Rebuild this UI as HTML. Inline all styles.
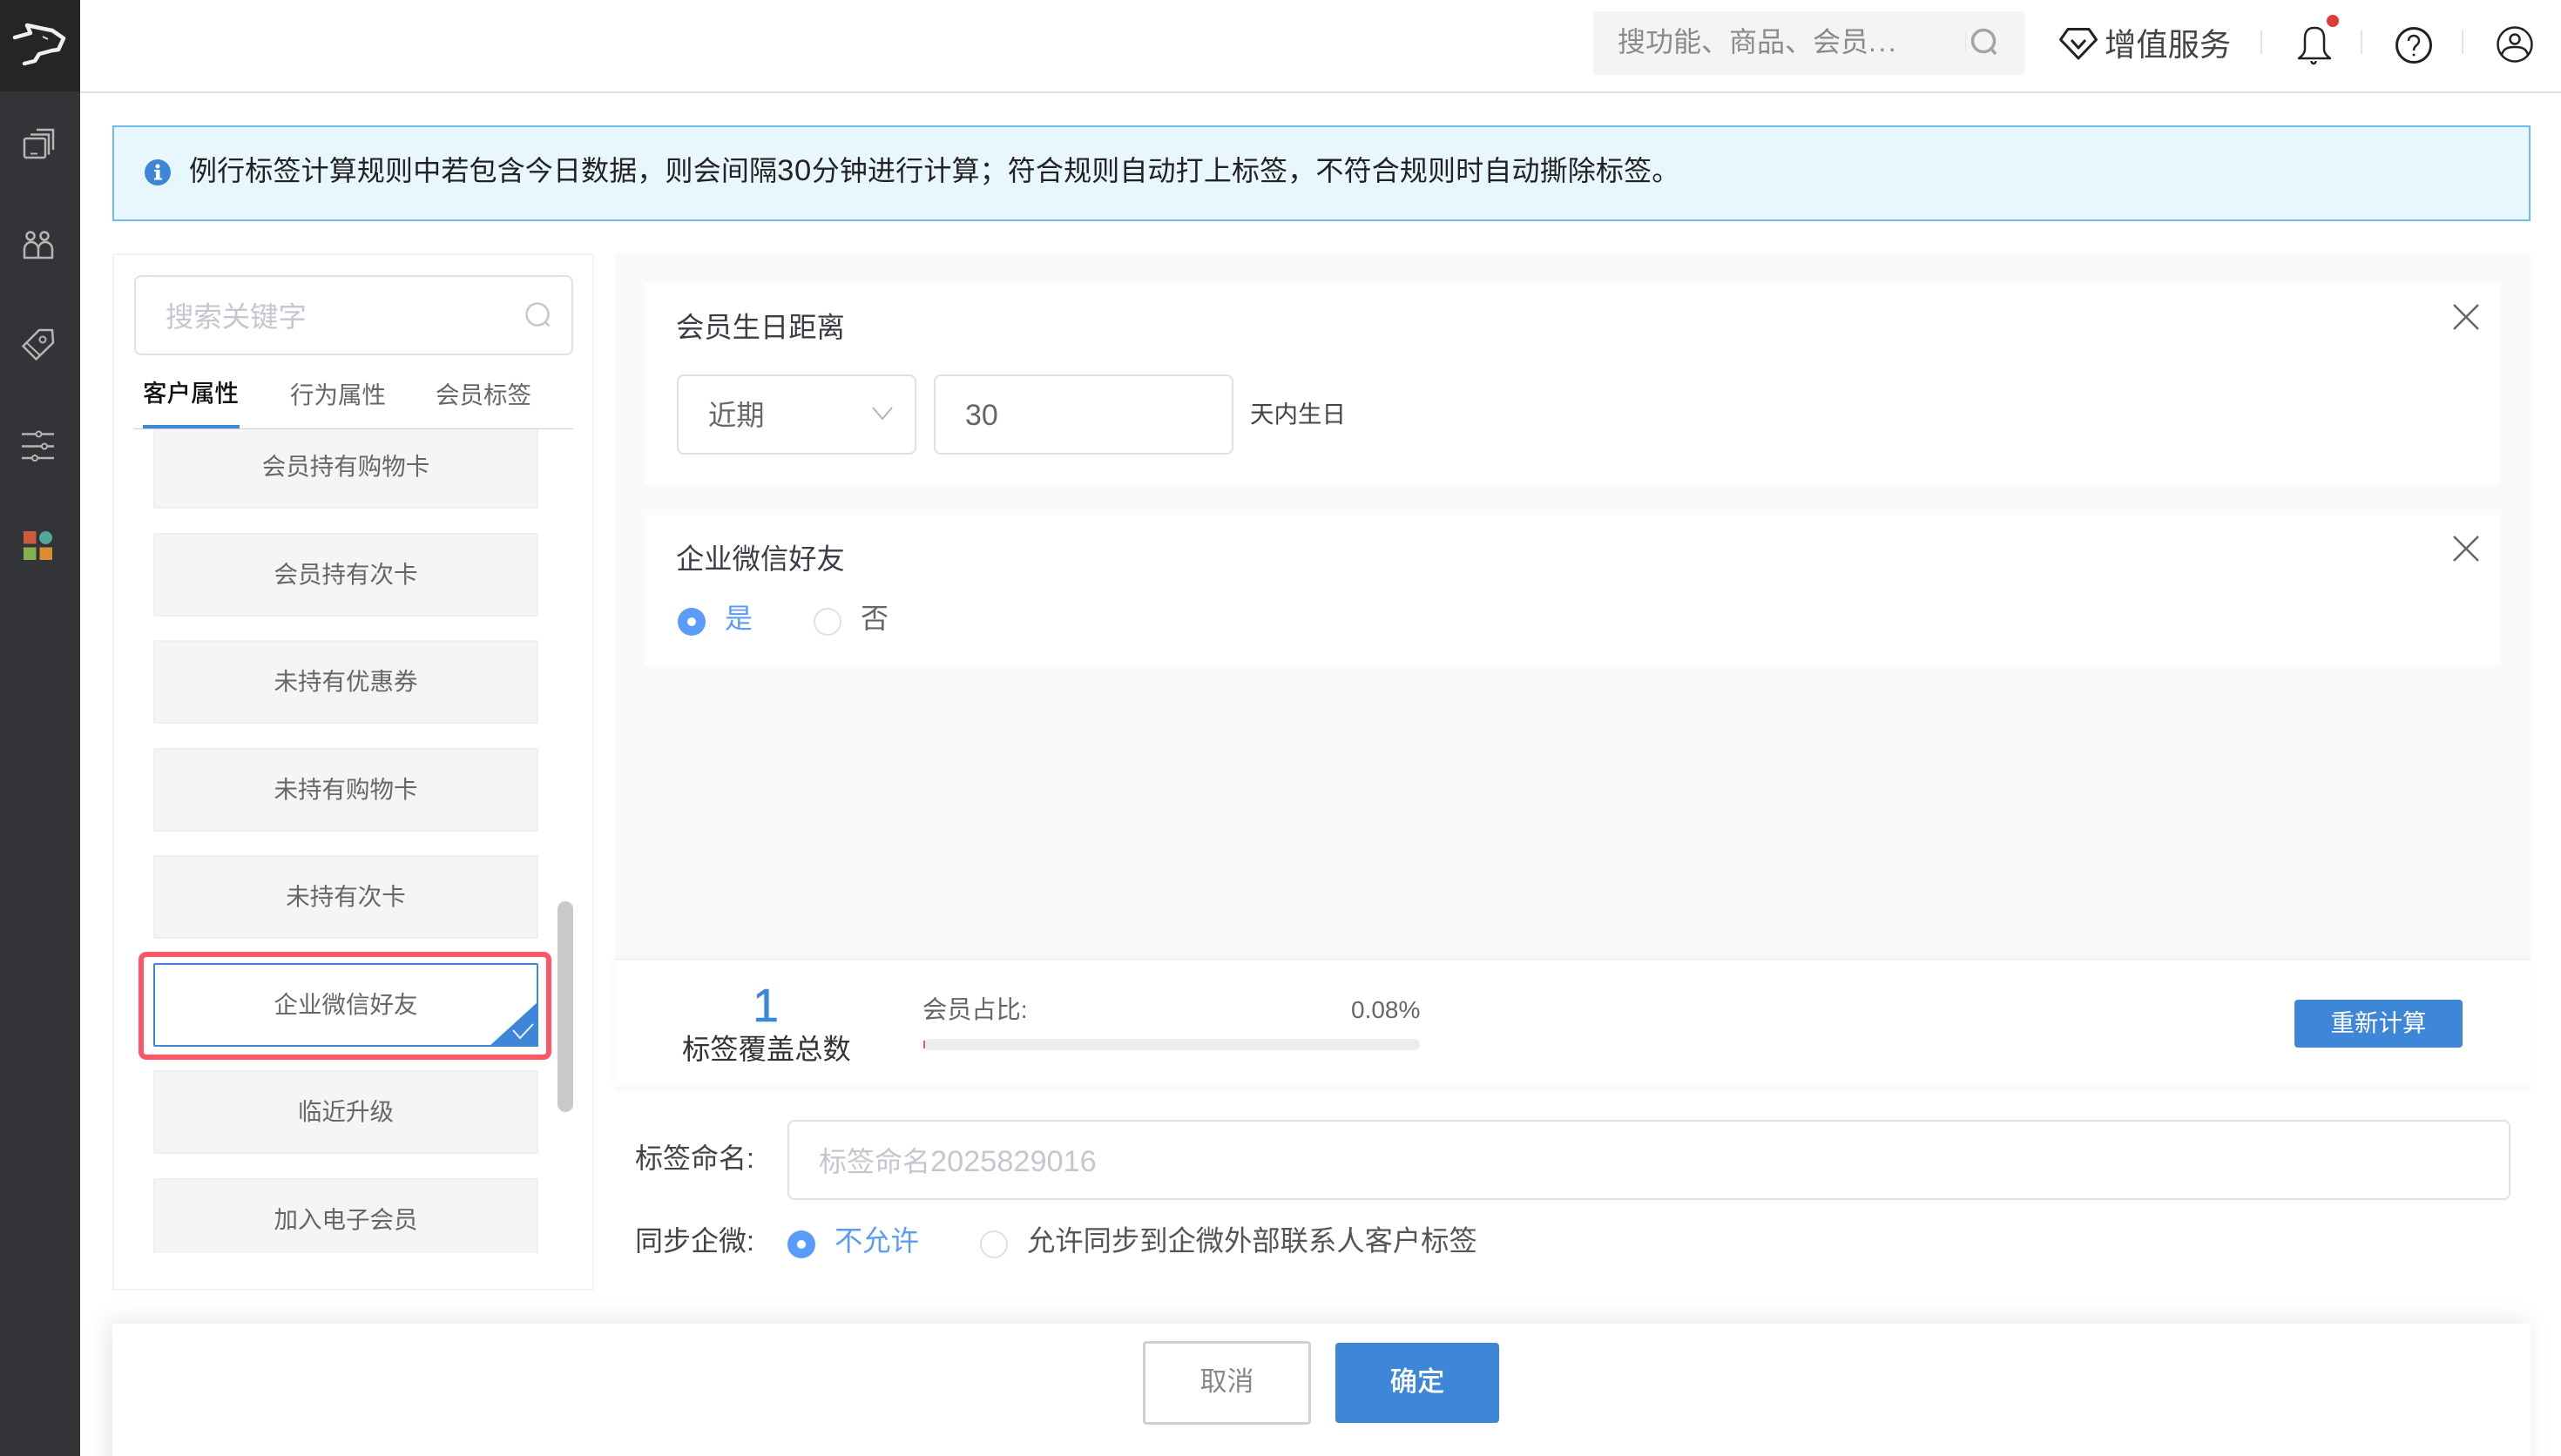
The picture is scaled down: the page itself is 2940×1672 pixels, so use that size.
<!DOCTYPE html>
<html lang="zh">
<head>
<meta charset="utf-8">
<title>标签</title>
<style>
html,body{margin:0;padding:0;background:#fff;width:2940px;height:1672px;overflow:hidden}
body{font-family:"Liberation Sans","Noto Sans CJK SC",sans-serif}
#r{position:absolute;left:0;top:0;width:2940px;height:1672px;overflow:hidden;contain:paint}
.a{position:absolute;box-sizing:border-box}
.t{position:absolute;white-space:nowrap;line-height:50px;height:50px}
.item{position:absolute;left:176px;width:442px;height:96px;background:#f5f5f5;border:2px solid #efefef;border-radius:2px;box-sizing:border-box;text-align:center;line-height:92px;font-size:27.5px;color:#666}
svg{position:absolute;overflow:visible}
</style>
</head>
<body>
<div id="r">
<!-- sidebar -->
<div class="a" style="left:0;top:0;width:92px;height:1672px;background:#323437"></div>
<div class="a" style="left:0;top:0;width:92px;height:105px;background:#262523"></div>
<svg style="left:0;top:0" width="92" height="650" fill="none" stroke="#cfcfcf">
  <polyline points="17,43 35,38 31,29 50,33 60,35 73,44 67,57 60,58 45,62 40,70 28,73" stroke="#f0f0f0" stroke-width="4.5" stroke-linejoin="round" stroke-linecap="round"/>
  <path d="M49 42l6 3" stroke="#ddd" stroke-width="2"/>
  <g stroke="#b5b5b5" stroke-width="2.5">
    <rect x="28" y="159" width="24" height="22" rx="2"/>
    <path d="M35 154.5h21v23"/>
    <path d="M42 149h19v23"/>
    <path d="M35 176.5h8" stroke-width="2"/>
    <circle cx="35" cy="271" r="4.5"/>
    <circle cx="51" cy="271" r="4.5"/>
    <path d="M28 296v-10a8 8 0 0 1 16 0v10zM44 296v-10a8 8 0 0 1 16 0v10z" stroke-linejoin="round"/>
    <path d="M26.500 397.500L45 379h15l1 14.500L41.500 412.500z" stroke-linejoin="round"/>
    <path d="M31 394l15 14" stroke-width="2"/>
    <circle cx="49" cy="390" r="3.500" stroke-width="2"/>
    <path d="M25 498.500h37M25 512.500h37M25 526h37" stroke-width="2.500"/>
    <circle cx="44.500" cy="498.500" r="3" fill="#323437" stroke-width="2"/>
    <circle cx="51" cy="512.500" r="3" fill="#323437" stroke-width="2"/>
    <circle cx="40" cy="526" r="3" fill="#323437" stroke-width="2"/>
  </g>
  <g stroke="none">
    <rect x="27" y="610" width="14.500" height="14.500" fill="#cf5a3a"/>
    <circle cx="52.500" cy="617.500" r="7.500" fill="#53a89a"/>
    <rect x="27" y="628.500" width="14.500" height="14.500" fill="#86b04d"/>
    <rect x="45.500" y="628.500" width="14.500" height="14.500" fill="#d98c30"/>
  </g>
</svg>

<!-- top bar -->
<div class="a" style="left:92px;top:105px;width:2848px;height:2px;background:#dedede"></div>
<div class="a" style="left:1829px;top:13px;width:496px;height:73px;background:#f4f4f5;border-radius:4px"></div>
<div class="t" style="left:1857px;top:23px;font-size:32px;color:#8a8a8a">搜功能、商品、会员<span style="letter-spacing:2.5px">...</span></div>
<svg style="left:2256px;top:26px" width="44" height="44" fill="none" stroke="#a4a4a4" stroke-width="3.5">
  <circle cx="21" cy="21" r="12.500"/><path d="M30 30l5 6"/>
  <path d="M0.500 10v24" stroke="#dbe7f3" stroke-width="1"/>
</svg>
<svg style="left:2364px;top:32px" width="44" height="37" fill="none" stroke="#222" stroke-width="3" stroke-linejoin="round">
  <path d="M10 1.500h24l8.500 12L22 35 1.500 13.500z"/><path d="M14 14l8 9 8-9"/>
</svg>
<div class="t" style="left:2416px;top:27px;font-size:36.300px;color:#444">增值服务</div>
<div class="a" style="left:2595px;top:35px;width:2px;height:27px;background:#e2e2e2"></div>
<div class="a" style="left:2710px;top:35px;width:2px;height:27px;background:#e2e2e2"></div>
<div class="a" style="left:2826px;top:35px;width:2px;height:27px;background:#e2e2e2"></div>
<svg style="left:2635px;top:29px" width="44" height="46" fill="none" stroke="#222" stroke-width="2.500" stroke-linejoin="round">
  <path d="M20 3c-7 0-10 5-10 12v13c0 4-3 7-7 10h36c-4-3-7-6-7-10V15c0-7-3-12-10-12z" transform="translate(1 0)"/>
  <path d="M18.500 41c0 4 5 4 5 0"/>
</svg>
<div class="a" style="left:2671px;top:17px;width:14px;height:14px;border-radius:50%;background:#e03a36"></div>
<svg style="left:2750px;top:31px" width="42" height="42" fill="none" stroke="#222" stroke-width="3">
  <circle cx="21" cy="21" r="19.500"/>
  <path d="M15 16c0-8 12-8 12 0 0 5-6 5-6 11" stroke-width="2.500"/>
  <circle cx="21" cy="32" r="1.500" fill="#222" stroke="none"/>
</svg>
<svg style="left:2866px;top:30px" width="42" height="42" fill="none" stroke="#222" stroke-width="2.500">
  <circle cx="21" cy="21" r="19.500"/>
  <circle cx="21" cy="15" r="5.500"/>
  <path d="M6 33c2-8 8-9 15-9s13 1 15 9"/>
</svg>

<!-- alert -->
<div class="a" style="left:129px;top:144px;width:2776px;height:110px;background:#e8f6fd;border:2px solid #6dbcef"></div>
<svg style="left:166px;top:183px" width="30" height="30">
  <circle cx="15" cy="15" r="15" fill="#3d86d8"/>
  <rect x="13" y="12" width="4.500" height="11" fill="#fff"/>
  <rect x="11" y="12" width="5" height="2" fill="#fff"/><rect x="11" y="21.500" width="9" height="2" fill="#fff"/>
  <circle cx="15" cy="8" r="2.500" fill="#fff"/>
</svg>
<div class="t" style="left:217px;top:171px;font-size:32px;color:#222;letter-spacing:.15px">例行标签计算规则中若包含今日数据，则会间隔<span style="font-size:34.500px;letter-spacing:.6px">30</span>分钟进行计算；符合规则自动打上标签，不符合规则时自动撕除标签。</div>

<!-- left panel -->
<div class="a" style="left:129px;top:291px;width:553px;height:1191px;border:2px solid #f4f4f5"></div>
<div class="a" style="left:154px;top:316px;width:504px;height:92px;border:2px solid #e0e1e6;border-radius:8px"></div>
<div class="t" style="left:190px;top:339px;font-size:32.400px;color:#c5c7d0">搜索关键字</div>
<svg style="left:600px;top:344px" width="36" height="36" fill="none" stroke="#c5c7d0" stroke-width="2.500">
  <circle cx="17" cy="17" r="12.500"/><path d="M26 26l4.500 4.500"/>
</svg>
<div class="t" style="left:164px;top:427px;font-size:27.500px;color:#111;font-weight:500">客户属性</div>
<div class="t" style="left:333px;top:429px;font-size:27.500px;color:#666">行为属性</div>
<div class="t" style="left:500px;top:429px;font-size:27.500px;color:#666">会员标签</div>
<div class="a" style="left:154px;top:492px;width:504px;height:1px;background:#cfcfcf"></div>
<div class="a" style="left:164px;top:488px;width:111px;height:4px;background:#3d86d8"></div>

<!-- list, clipped -->
<div class="a" style="left:0;top:493px;width:700px;height:946px;overflow:hidden">
  <div class="item" style="top:-5px">会员持有购物卡</div>
  <div class="item" style="top:119px">会员持有次卡</div>
  <div class="item" style="top:242px">未持有优惠券</div>
  <div class="item" style="top:366px">未持有购物卡</div>
  <div class="item" style="top:489px">未持有次卡</div>
  <div class="item" style="top:613px;background:#fff;border:2px solid #3d86d8">企业微信好友</div>
  <div class="item" style="top:736px">临近升级</div>
  <div class="item" style="top:860px">加入电子会员</div>
</div>
<svg style="left:561px;top:1150px" width="57" height="52">
  <path d="M57 0V52H0z" fill="#3d86d8"/>
  <path d="M28 33l8 9 15-16" fill="none" stroke="#e8f4ff" stroke-width="2"/>
</svg>
<div class="a" style="left:159px;top:1093px;width:474px;height:124px;border:6px solid #fe5568;border-radius:9px"></div>
<div class="a" style="left:640px;top:1035px;width:18px;height:242px;background:#c9c9c9;border-radius:9px"></div>

<!-- right panel -->
<div class="a" style="left:706px;top:291px;width:2199px;height:962px;background:#fafafa"></div>
<div class="a" style="left:740px;top:325px;width:2130px;height:232px;background:#fff"></div>
<div class="a" style="left:740px;top:591px;width:2130px;height:173px;background:#fff"></div>
<div class="t" style="left:776px;top:351px;font-size:32.300px;color:#3c3c46">会员生日距离</div>
<svg style="left:2816px;top:349px" width="30" height="30" fill="none" stroke="#666" stroke-width="2.500"><path d="M1 1l28 28M29 1L1 29"/></svg>
<div class="a" style="left:777px;top:430px;width:275px;height:92px;border:2px solid #e0e0e6;border-radius:8px"></div>
<div class="t" style="left:813px;top:452px;font-size:32.300px;color:#666">近期</div>
<svg style="left:1001px;top:467px" width="24" height="16" fill="none" stroke="#b5b6bd" stroke-width="2"><path d="M1 1l11 13L23 1"/></svg>
<div class="a" style="left:1072px;top:430px;width:344px;height:92px;border:2px solid #e0e0e6;border-radius:8px"></div>
<div class="t" style="left:1108px;top:452px;font-size:34px;color:#666">30</div>
<div class="t" style="left:1435px;top:451px;font-size:27.500px;color:#444">天内生日</div>

<div class="t" style="left:776px;top:617px;font-size:32.300px;color:#3c3c46">企业微信好友</div>
<svg style="left:2816px;top:615px" width="30" height="30" fill="none" stroke="#666" stroke-width="2.500"><path d="M1 1l28 28M29 1L1 29"/></svg>
<div class="a" style="left:778px;top:698px;width:32px;height:32px;border-radius:50%;background:#5a9cf8"></div>
<div class="a" style="left:789px;top:709px;width:10px;height:10px;border-radius:50%;background:#fff"></div>
<div class="t" style="left:832px;top:685px;font-size:32px;color:#5a9cf8">是</div>
<div class="a" style="left:934px;top:698px;width:32px;height:32px;border-radius:50%;border:2px solid #e0e0e6;background:#fff"></div>
<div class="t" style="left:988px;top:685px;font-size:32px;color:#666">否</div>

<!-- stats -->
<div class="a" style="left:705px;top:1103px;width:2200px;height:144px;background:#fff;box-shadow:0 -3px 6px rgba(0,0,0,.05)"></div>
<div class="t" style="left:849px;top:1130px;width:60px;text-align:center;font-size:54px;color:#3d86d8;-webkit-text-stroke:.5px #3d86d8">1</div>
<div class="t" style="left:783px;top:1180px;font-size:32.300px;color:#333">标签覆盖总数</div>
<div class="t" style="left:1059px;top:1134px;font-size:28.200px;color:#666">会员占比:</div>
<div class="t" style="left:1551px;top:1135px;font-size:28px;color:#666">0.08%</div>
<div class="a" style="left:1060px;top:1193px;width:570px;height:13px;background:#ebecf0;border-radius:7px"></div>
<div class="a" style="left:1060px;top:1195px;width:2px;height:9px;background:#f0566a"></div>
<div class="a" style="left:2634px;top:1148px;width:193px;height:55px;background:#3d86d8;border-radius:4px;color:#fff;font-size:27.500px;line-height:53px;text-align:center">重新计算</div>

<!-- name -->
<div class="t" style="left:729px;top:1305px;font-size:32px;color:#444">标签命名:</div>
<div class="a" style="left:904px;top:1286px;width:1978px;height:92px;border:2px solid #e0e0e6;border-radius:8px"></div>
<div class="t" style="left:940px;top:1309px;font-size:32px;color:#c5c7d0">标签命名<span style="font-size:34.300px">2025829016</span></div>
<div class="t" style="left:729px;top:1400px;font-size:32px;color:#444">同步企微:</div>
<div class="a" style="left:904px;top:1413px;width:32px;height:32px;border-radius:50%;background:#5a9cf8"></div>
<div class="a" style="left:915px;top:1424px;width:10px;height:10px;border-radius:50%;background:#fff"></div>
<div class="t" style="left:958px;top:1400px;font-size:32.300px;color:#5a9cf8">不允许</div>
<div class="a" style="left:1125px;top:1413px;width:32px;height:32px;border-radius:50%;border:2px solid #e0e0e6;background:#fff"></div>
<div class="t" style="left:1179px;top:1400px;font-size:32.300px;color:#555">允许同步到企微外部联系人客户标签</div>

<!-- footer -->
<div class="a" style="left:129px;top:1520px;width:2776px;height:200px;background:#fff;box-shadow:-5px -3px 26px rgba(0,0,0,.1)"></div>
<div class="a" style="left:1312px;top:1540px;width:193px;height:96px;background:#fff;border:3px solid #d0d0d0;border-radius:4px;text-align:center;font-size:31px;line-height:88px;color:#888">取消</div>
<div class="a" style="left:1533px;top:1542px;width:188px;height:92px;background:#3d86d8;border-radius:4px;text-align:center;font-size:31.500px;line-height:88px;color:#fff;font-weight:500">确定</div>
</div>
</body>
</html>
